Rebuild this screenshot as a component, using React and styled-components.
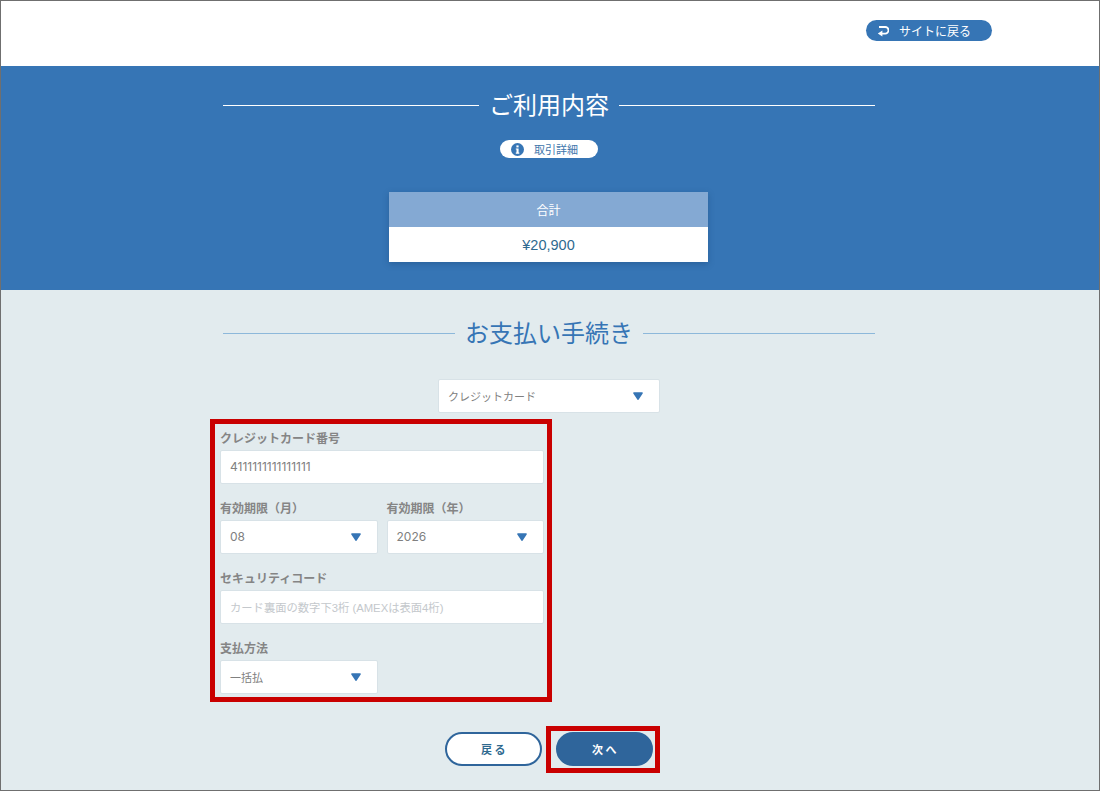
import styled, { createGlobalStyle } from 'styled-components'

const GlobalStyle = createGlobalStyle`
  * {
    box-sizing: border-box;
  }

  body {
    margin: 0;
    font-family: "Liberation Sans", "Noto Sans CJK JP", sans-serif;
  }
`

const Page = styled.div`
  width: 1100px;
  height: 791px;
  border: 1px solid #6f6f6f;
  overflow: hidden;
  background: #e2ebee;
`

const Header = styled.header`
  height: 65px;
  background: #fff;
  display: flex;
  justify-content: flex-end;
  padding: 19px 107px 0 0;
`

const BackLink = styled.a`
  width: 126px;
  height: 21px;
  border-radius: 11px;
  background: #3675b5;
  color: #fff;
  font-size: 12px;
  display: flex;
  align-items: center;
  padding-left: 11px;
  gap: 10px;
`

const Summary = styled.section`
  height: 224px;
  background: #3675b5;
  display: flex;
  flex-direction: column;
  align-items: center;
  padding: 23px 2px 0 0;
`

const Title = styled.h2`
  width: 652px;
  margin: 0;
  height: 32px;
  display: flex;
  align-items: center;
  gap: 10px;
  font-weight: 400;
  font-size: 24px;
  color: ${(props) => props.$color};
  white-space: nowrap;

  &::before,
  &::after {
    content: '';
    flex: 1;
    height: 1px;
    background: ${(props) => props.$line};
  }

  span {
    margin-bottom: 4px;
  }
`

const DetailLink = styled.a`
  width: 98px;
  height: 18px;
  margin-top: 19px;
  border-radius: 9px;
  background: #fff;
  color: #3f76ab;
  font-size: 11px;
  display: flex;
  align-items: center;
  padding-left: 11px;
  gap: 10px;
`

const TotalCard = styled.div`
  width: 319px;
  margin: 34px 1px 0 0;
  box-shadow: 0 2px 6px rgba(20, 60, 110, 0.35);
`

const TotalHead = styled.div`
  height: 35px;
  background: #84a9d3;
  color: #fff;
  font-size: 12px;
  display: flex;
  align-items: center;
  justify-content: center;
`

const TotalValue = styled.div`
  height: 35px;
  background: #fff;
  color: #2f6a8f;
  font-size: 14.5px;
  display: flex;
  align-items: center;
  justify-content: center;
`

const Payment = styled.section`
  display: flex;
  flex-direction: column;
  align-items: center;
  padding: 27px 2px 0 0;
`

const MethodSelect = styled.div`
  width: 222px;
  height: 34px;
  margin-top: 30px;
  background: #fff;
  border: 1px solid #d8e2e7;
  border-radius: 2px;
  color: #808080;
  font-size: 11px;
  display: flex;
  align-items: center;
  justify-content: space-between;
  padding: 0 16px 0 9px;
`

const FormColumn = styled.div`
  width: 678px;
  margin-top: 6px;
`

const HighlightBox = styled.div`
  width: 342px;
  height: 283px;
  border: 5px solid #c90000;
  padding: 6px 3px 0 5px;
  display: flex;
  flex-direction: column;
  gap: 16px;
`

const Row = styled.div`
  display: flex;
  gap: 9px;
`

const Field = styled.div`
  width: ${(props) => (props.$half ? '157.5px' : '100%')};
`

const Label = styled.div`
  height: 20px;
  color: #858585;
  font-size: 12px;
  font-weight: 700;
  line-height: 19px;
  white-space: nowrap;
`

const Input = styled.div`
  height: 34px;
  background: #fff;
  border: 1px solid #d8e2e7;
  border-radius: 2px;
  color: ${(props) => (props.$placeholder ? '#c4c8cc' : '#808080')};
  font-size: ${(props) => (props.$placeholder ? '11.3px' : '11px')};
  display: flex;
  align-items: center;
  justify-content: space-between;
  padding: 0 16px 1px 9px;
`

const Digits = styled.span`
  font-family: Inter, "Liberation Sans", sans-serif;
  font-size: 12px;
`

const Buttons = styled.div`
  display: flex;
  gap: 14px;
  margin-top: 30px;
`

const ActionButton = styled.button`
  position: relative;
  width: 97px;
  height: 34px;
  border-radius: 17px;
  border: 2px solid #2f659b;
  background: ${(props) => (props.$primary ? '#2f659b' : '#fff')};
  color: ${(props) => (props.$primary ? '#fff' : '#2f6a8f')};
  font-family: inherit;
  font-size: 11px;
  font-weight: 700;
  letter-spacing: 2.5px;
  padding: 0 0 0 2px;

  ${(props) =>
    props.$primary &&
    `&::after {
      content: '';
      position: absolute;
      top: -8px;
      left: -12px;
      right: -9px;
      bottom: -9px;
      border: 5px solid #c90000;
    }`}
`

const Arrow = () => (
  <svg width="10" height="8" viewBox="0 0 10 8">
    <path d="M1 .2h8a.8.8 0 0 1 .7 1.2L5.7 7.6a.8.8 0 0 1-1.4 0L.3 1.4A.8.8 0 0 1 1 .2z" fill="#3675b5" />
  </svg>
)

const ReturnIcon = () => (
  <svg width="12" height="12" viewBox="0 0 12 12" fill="none">
    <path d="M2 2h6.2a2.7 2.7 0 0 1 0 6.6H4.4" stroke="#fff" strokeWidth="1.8" />
    <path d="M5.4 5.4v6.2L.8 8.5z" fill="#fff" />
  </svg>
)

const InfoIcon = () => (
  <svg width="13" height="13" viewBox="0 0 13 13">
    <circle cx="6.5" cy="6.5" r="6.5" fill="#3675b5" />
    <rect x="5.4" y="2.4" width="2.2" height="2" fill="#fff" />
    <path d="M4.8 5.4h2.8v4.2h.7v1.1H4.8V9.6h.7V6.5h-.7z" fill="#fff" />
  </svg>
)

const App = () => (
  <Page>
    <GlobalStyle />
    <Header>
      <BackLink>
        <ReturnIcon />
        サイトに戻る
      </BackLink>
    </Header>
    <Summary>
      <Title $color="#fff" $line="#fff"><span>ご利用内容</span></Title>
      <DetailLink>
        <InfoIcon />
        取引詳細
      </DetailLink>
      <TotalCard>
        <TotalHead>合計</TotalHead>
        <TotalValue>¥20,900</TotalValue>
      </TotalCard>
    </Summary>
    <Payment>
      <Title $color="#3675b5" $line="#8db8da"><span>お支払い手続き</span></Title>
      <MethodSelect>
        クレジットカード
        <Arrow />
      </MethodSelect>
      <FormColumn>
        <HighlightBox>
          <Field>
            <Label>クレジットカード番号</Label>
            <Input><Digits>4111111111111111</Digits></Input>
          </Field>
          <Row>
            <Field $half>
              <Label>有効期限（月）</Label>
              <Input><Digits>08</Digits><Arrow /></Input>
            </Field>
            <Field $half>
              <Label>有効期限（年）</Label>
              <Input><Digits>2026</Digits><Arrow /></Input>
            </Field>
          </Row>
          <Field>
            <Label>セキュリティコード</Label>
            <Input $placeholder>カード裏面の数字下3桁 (AMEXは表面4桁)</Input>
          </Field>
          <Field $half>
            <Label>支払方法</Label>
            <Input>一括払<Arrow /></Input>
          </Field>
        </HighlightBox>
      </FormColumn>
      <Buttons>
        <ActionButton>戻る</ActionButton>
        <ActionButton $primary>次へ</ActionButton>
      </Buttons>
    </Payment>
  </Page>
)

export default App
